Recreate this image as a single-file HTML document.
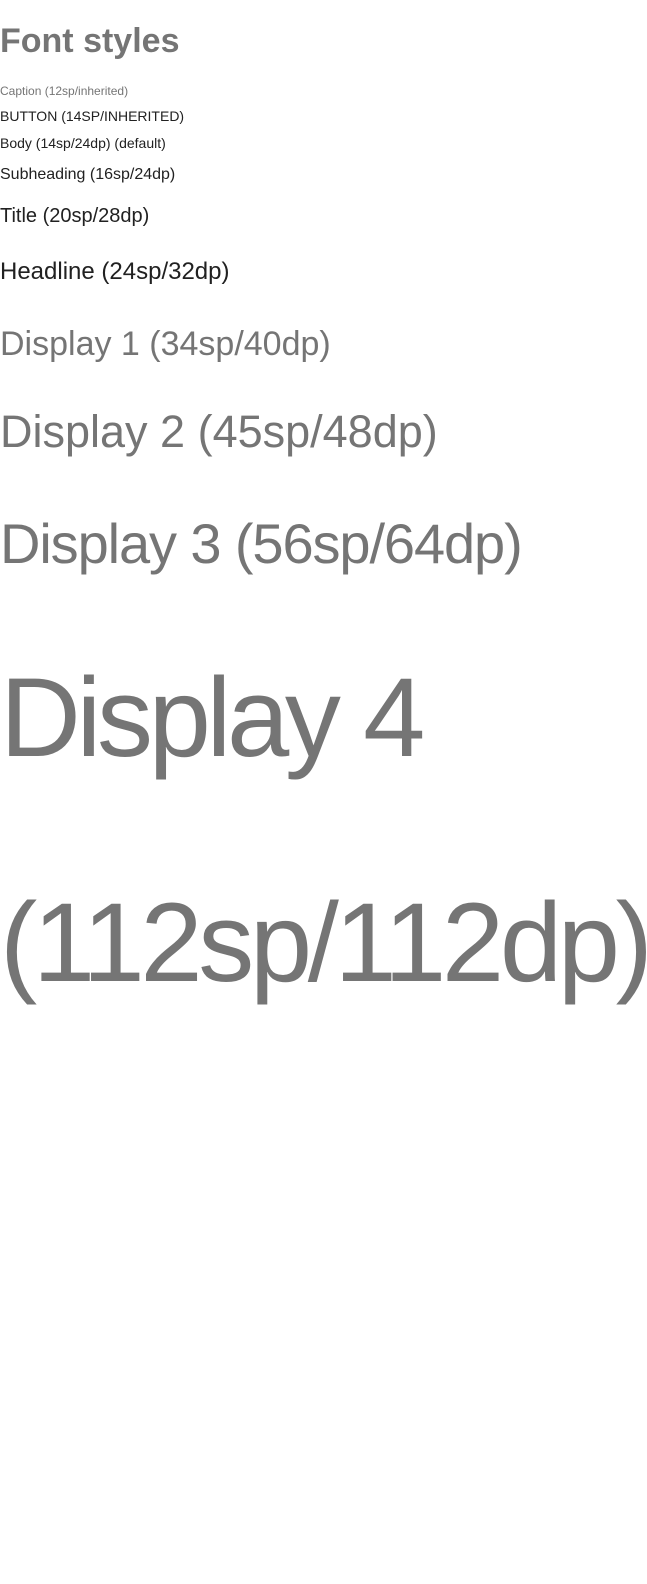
<!DOCTYPE html>
<html><head><meta charset="utf-8"><style>
html,body{margin:0;padding:0;width:647px;height:1584px;background:#fff;overflow:hidden}
div{position:absolute;left:0;line-height:1;white-space:nowrap;font-family:"Liberation Sans",Arial,sans-serif}
.g{color:#757575}.k{color:#212121}
</style></head><body>
<div class="g" style="top:24px;font-size:34px;font-weight:bold">Font styles</div>
<div class="g" style="top:85px;font-size:12px">Caption (12sp/inherited)</div>
<div class="k" style="top:109px;font-size:14px">BUTTON (14SP/INHERITED)</div>
<div class="k" style="top:136px;font-size:14px">Body (14sp/24dp) (default)</div>
<div class="k" style="top:167px;font-size:16px">Subheading (16sp/24dp)</div>
<div class="k" style="top:206px;font-size:20px">Title (20sp/28dp)</div>
<div class="k" style="top:260px;font-size:24px">Headline (24sp/32dp)</div>
<div class="g" style="top:327px;font-size:34px">Display 1 (34sp/40dp)</div>
<div class="g" style="top:409px;font-size:45px">Display 2 (45sp/48dp)</div>
<div class="g" style="top:516px;font-size:56px;letter-spacing:-1.1px">Display 3 (56sp/64dp)</div>
<div class="g" style="top:662px;font-size:112px;letter-spacing:-4.4px">Display 4</div>
<div class="g" style="top:887px;font-size:112px;letter-spacing:-4.4px">(112sp/112dp)</div>
</body></html>
